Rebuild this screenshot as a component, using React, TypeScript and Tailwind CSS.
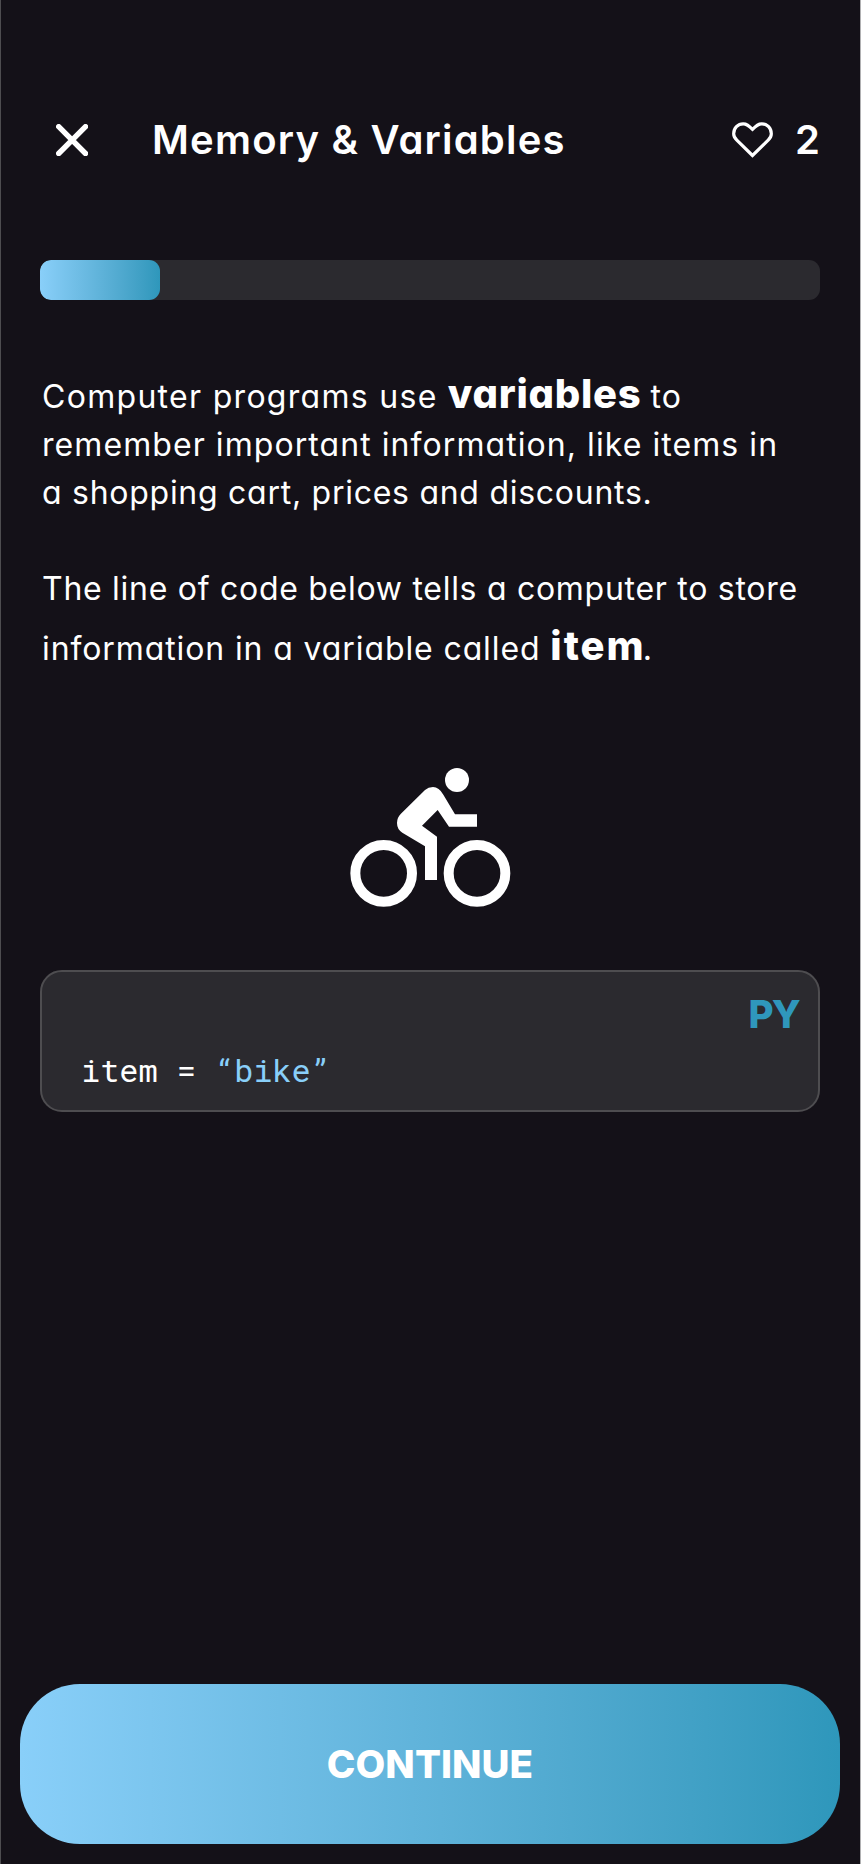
import React from "react";

function CloseIcon() {
  return (
    <svg className="h-8 w-8" viewBox="0 0 32 32" fill="none" stroke="white" strokeWidth="5.4" strokeLinecap="round">
      <path d="M2.700 2.700 29.500 29.500M29.500 2.700 2.700 29.500" />
    </svg>
  );
}

function HeartIcon() {
  return (
    <svg className="h-9 w-[41px]" viewBox="0 0 123 108" fill="none" stroke="white" strokeWidth="9.5" strokeLinejoin="miter">
      <path d="M61.500 100.500 14.500 54.500C7.500 47.500 5 42 5 35C5 18.500 17.500 5.500 33.500 5.500C44 5.500 49 9.500 61.500 22C74 9.500 79 5.500 89.500 5.500C105.500 5.500 118 18.500 118 35C118 42 115.500 47.500 108.500 54.500Z" />
    </svg>
  );
}

function BikeIcon() {
  return (
    <svg className="h-[139px] w-[161px]" viewBox="0 0 483 417" fill="white">
      <circle cx="101" cy="316" r="85" fill="none" stroke="white" strokeWidth="30" />
      <circle cx="381" cy="316" r="85" fill="none" stroke="white" strokeWidth="30" />
      <circle cx="321" cy="36" r="36" />
      <path d="M381 139H315L280 80Q267 57 249 57Q235 57 225 66L152 138Q141 149 141 165Q141 184 157 194L225 235V336H261V206L216 173L263 126L297 176H381Z" />
    </svg>
  );
}

function Header() {
  return (
    <header className="flex h-15 items-center">
      <button type="button" aria-label="Close" className="ml-[55px]">
        <CloseIcon />
      </button>
      <h1 className="ml-16 text-[40px] leading-[60px] font-semibold tracking-[1.2px] whitespace-nowrap">
        Memory &amp; Variables
      </h1>
      <div className="mr-10 ml-auto flex items-center gap-[22px]">
        <HeartIcon />
        <span className="text-[40px] leading-[60px] font-semibold">2</span>
      </div>
    </header>
  );
}

function Lesson() {
  return (
    <section className="mt-[73px] pl-[41px] text-[32px] leading-12 whitespace-nowrap">
      <p className="tracking-[1.07px]">
        <span className="tracking-[1.3px]">Computer programs use</span>{" "}
        <strong className="-mr-px text-[40px] leading-none font-extrabold tracking-[0.75px]">variables</strong> to
      </p>
      <p className="tracking-[1.07px]">remember important information, like items in</p>
      <p className="tracking-[0.73px]">a shopping cart, prices and discounts.</p>
      <p className="mt-12 tracking-[0.72px]">The line of code below tells a computer to store</p>
      <p className="mt-3 tracking-[0.89px]">
        information in a variable called{" "}
        <strong className="-mr-[3px] text-[40px] leading-none font-extrabold tracking-[2px]">item</strong>.
      </p>
    </section>
  );
}

function CodeCard() {
  return (
    <section className="mt-[63px] mr-10 ml-[39px] h-[142px] rounded-[22px] border-2 border-[#4e4d50] bg-[#2b2a2f] pt-[22px]">
      <div className="pr-[19px] text-right text-[38.5px] leading-10 font-extrabold tracking-[-1.8px] text-[#2f97bc]">PY</div>
      <pre className="mt-4 pl-[39px] font-['Roboto_Mono','Liberation_Mono',monospace] text-[32px] leading-10 tracking-[-0.06px]">
        <code className="font-[inherit]">
          item = <span className="text-[#89cff9]">“bike”</span>
        </code>
      </pre>
    </section>
  );
}

export default function App() {
  return (
    <div className="flex min-h-[1864px] w-full flex-col border-r border-l border-r-[#b0b0b2] border-l-[#4e4d50] bg-[#141118] pt-[110px] pb-5 font-['Inter','Noto_Sans',sans-serif] text-white [font-feature-settings:'cv11']">
      <Header />
      <div className="mt-[90px] mr-10 ml-[39px] h-10 overflow-hidden rounded-[11px] bg-[#2b2a2f]">
        <div className="h-full w-30 rounded-[11px] bg-linear-to-r from-[#89cff9] to-[#2e97bb]" />
      </div>
      <Lesson />
      <div className="mt-[95px] flex justify-center">
        <BikeIcon />
      </div>
      <CodeCard />
      <button
        type="button"
        className="mt-auto mr-5 ml-[19px] h-40 shrink-0 rounded-[60px] bg-linear-to-r from-[#89cff9] to-[#2e97bb] pt-px text-[38.5px] font-extrabold tracking-[0.05px]"
      >
        CONTINUE
      </button>
    </div>
  );
}
